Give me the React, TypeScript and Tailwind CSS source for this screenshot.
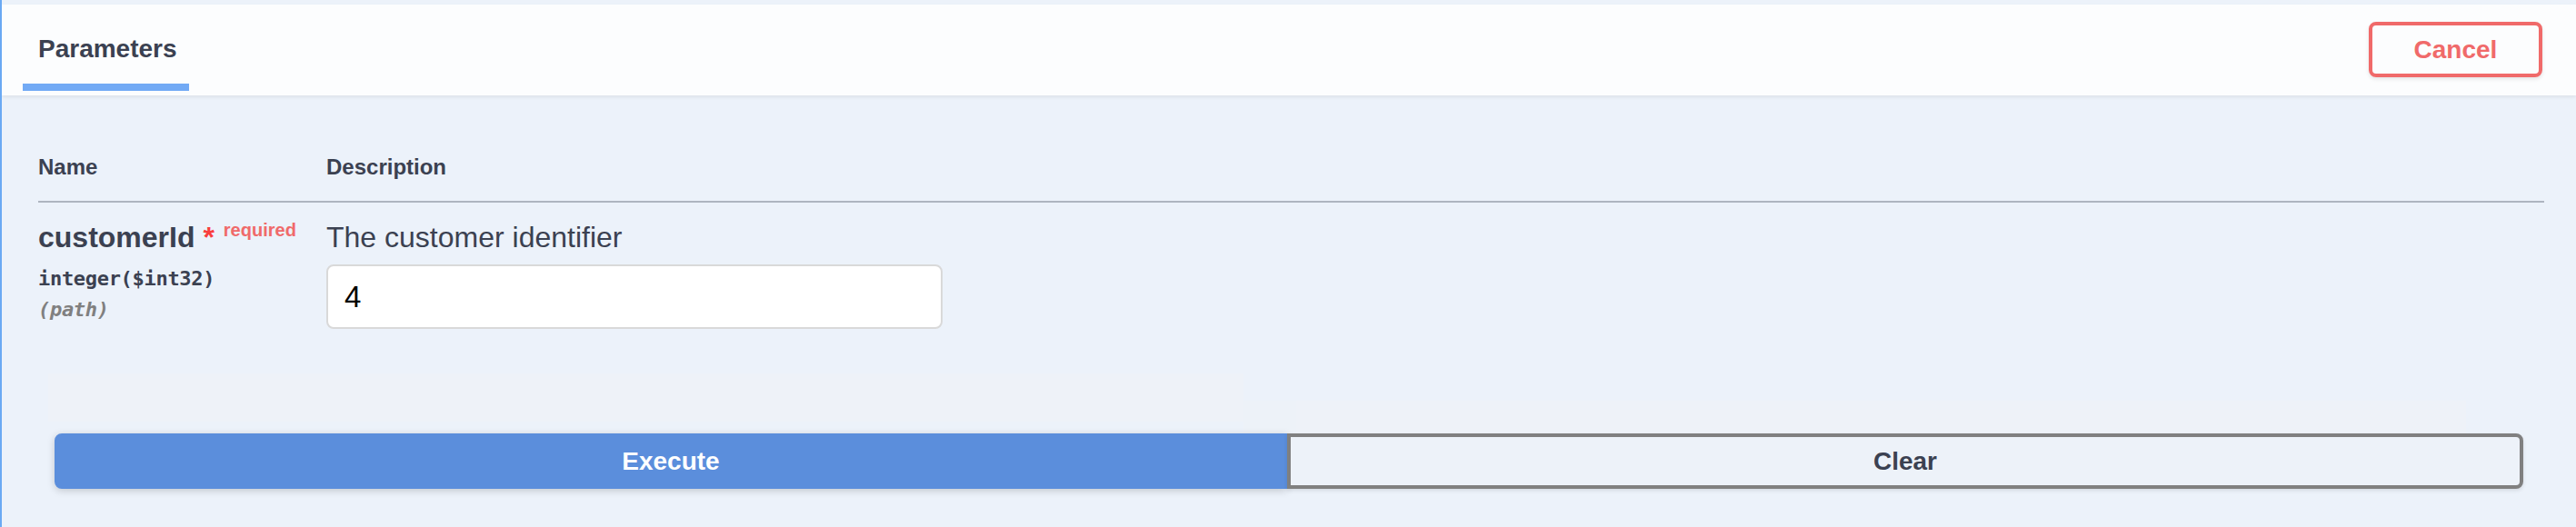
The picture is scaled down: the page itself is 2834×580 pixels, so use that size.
const sans = "font-['Liberation_Sans',Arial,sans-serif]"
const mono = "font-['DejaVu_Sans_Mono','Liberation_Mono',monospace]"

const ParamsHeader = () => {
  return (
    <div className="flex h-[100px] items-start justify-between bg-[#fcfdfe] pl-[23px] pr-[37px] shadow-[0_2px_4px_rgba(0,0,0,0.07)]">
      <div className="flex w-[183px] flex-col pt-[33px]">
        <h4 className="pl-[17px] text-[28px] font-bold leading-[32px] text-[#3b4151]">Parameters</h4>
        <div className="mt-[22px] h-[8px] w-full bg-[#72aaf5]" />
      </div>
      <button className="mt-[19px] flex h-[61px] w-[191px] items-center justify-center rounded-[8px] border-[4px] border-[#f06a6a] bg-transparent text-[28px] font-bold text-[#f06a6a] shadow-[0_2px_4px_rgba(0,0,0,0.1)]">
        Cancel
      </button>
    </div>
  )
}

const ParamsTable = () => {
  return (
    <div className="pl-[40px] pr-[35px]">
      <div className="flex border-b-2 border-[#aeb5c0] pt-[65px] pb-[23px] text-[24px] font-bold leading-[28px] text-[#3b4151]">
        <div className="w-[317px]">Name</div>
        <div>Description</div>
      </div>
      <div className="flex pt-[19px]">
        <div className="w-[317px]">
          <div className="text-[32px] font-bold leading-[38px] text-[#3b4151]">
            customerId <span className="text-[#f93e3e]">*</span>
            <span className="relative -top-[12px] pl-[10px] text-[20px] text-[#f06a6a]">required</span>
          </div>
          <div className={`${mono} pt-[10px] text-[22px] font-semibold leading-[26px] tracking-[-0.3px] text-[#3b4151]`}>
            integer($int32)
          </div>
          <div className={`${mono} pt-[8px] text-[22px] font-semibold italic leading-[26px] tracking-[-0.3px] text-[#808080]`}>
            (path)
          </div>
        </div>
        <div>
          <p className="text-[32px] leading-[38px] text-[#3b4151]">The customer identifier</p>
          <div className="mt-[11px] flex h-[71px] w-[678px] items-center rounded-[8px] border-2 border-[#d9d9d9] bg-white pl-[18px] text-[33px] text-black">
            4
          </div>
        </div>
      </div>
    </div>
  )
}

export default function App() {
  return (
    <div className={`${sans} h-[580px] w-[2834px] overflow-hidden border-l-2 border-[#6aa9f3] bg-[#ecf2fa] pt-[5px]`}>
      <ParamsHeader />
      <ParamsTable />
      <div className="mt-[49px] flex h-[66px] items-end pl-[51px]">
        <div className="h-[53px] w-[1315px] self-start bg-[#eef2f8]" />
        <div className="h-[36px] w-[58px] bg-[#edf2f8]" />
        <div className="h-[36px] w-[1287px] bg-[#eef2f8]" />
      </div>
      <div className="mx-[58px] flex h-[61px]">
        <button className="flex flex-1 items-center justify-center rounded-l-[8px] border-2 border-[#5b8edc] bg-[#5b8edc] text-[28px] font-bold text-white shadow-[0_2px_8px_rgba(0,0,0,0.18)]">
          Execute
        </button>
        <button className="flex flex-1 items-center justify-center rounded-r-[8px] border-[4px] border-[#808080] bg-[#edf2f9] text-[28px] font-bold text-[#3b4151] shadow-[0_2px_4px_rgba(0,0,0,0.1)]">
          Clear
        </button>
      </div>
    </div>
  )
}
